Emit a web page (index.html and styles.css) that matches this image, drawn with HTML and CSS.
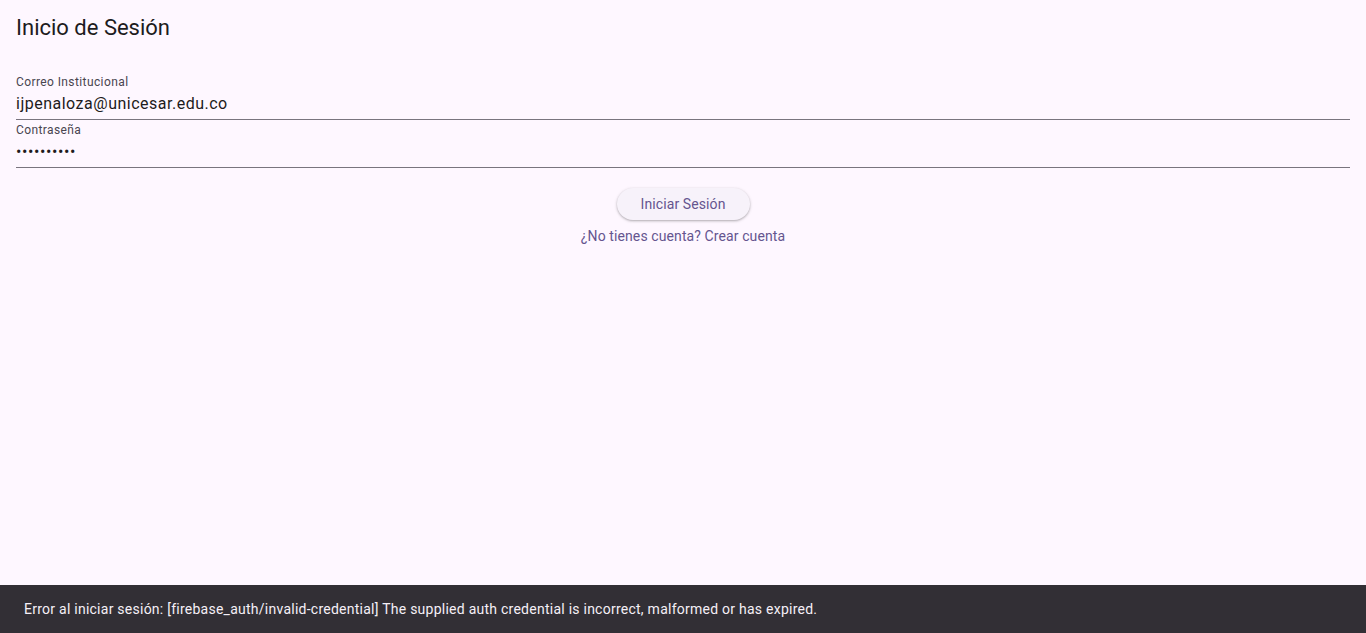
FILE: index.html
```html
<!DOCTYPE html>
<html lang="es">
<head>
<meta charset="utf-8">
<title>Inicio de Sesión</title>
<link rel="stylesheet" href="styles.css">
</head>
<body>
<div class="page">
  <main class="content">
    <h1 class="title">Inicio de Sesión</h1>
    <div class="field">
      <div class="field-label">Correo Institucional</div>
      <div class="field-value">ijpenaloza@unicesar.edu.co</div>
    </div>
    <div class="field">
      <div class="field-label">Contraseña</div>
      <div class="field-value field-password">••••••••••</div>
    </div>
    <div class="actions">
      <button class="btn-elevated" type="button">Iniciar Sesión</button>
      <a class="link" href="#">¿No tienes cuenta? Crear cuenta</a>
    </div>
  </main>
  <div class="snackbar">Error al iniciar sesión: [firebase_auth/invalid-credential] The supplied auth credential is incorrect, malformed or has expired.</div>
</div>
</body>
</html>
```

FILE: styles.css
```css
html, body {
  margin: 0;
  padding: 0;
  height: 100%;
}
body {
  background: #FEF7FF;
  font-family: Roboto, "Liberation Sans", sans-serif;
  color: #1D1B20;
  overflow: hidden;
}
.page {
  display: flex;
  flex-direction: column;
  min-height: 100vh;
}
.content {
  display: flex;
  flex-direction: column;
  padding: 0 16px;
}
.title {
  margin: 14px 0 30px;
  font-size: 22px;
  line-height: 28px;
  font-weight: 400;
  color: #1D1B20;
}
.field {
  display: flex;
  flex-direction: column;
  padding: 2px 0 3px;
  border-bottom: 1px solid #79747E;
}
.field-label {
  font-size: 12px;
  line-height: 16px;
  letter-spacing: 0.4px;
  color: #49454F;
}
.field-value {
  padding-top: 2px;
  font-size: 16px;
  line-height: 24px;
  letter-spacing: 0.5px;
  color: #1D1B20;
}
.field-password {
  letter-spacing: 0.6px;
}
.actions {
  display: flex;
  flex-direction: column;
  align-items: center;
  padding-top: 20px;
}
.btn-elevated {
  height: 32px;
  padding: 0 24px;
  border: none;
  border-radius: 16px;
  background: #F7F2FA;
  color: #65558F;
  font-family: Roboto, "Liberation Sans", sans-serif;
  font-size: 14px;
  font-weight: 400;
  letter-spacing: 0.1px;
  line-height: 20px;
  box-shadow: 0 1px 2px rgba(0,0,0,0.22), 0 1px 3px 1px rgba(0,0,0,0.08);
  cursor: pointer;
}
.link {
  margin-top: 6px;
  font-size: 14px;
  line-height: 20px;
  letter-spacing: 0.1px;
  color: #65558F;
  text-decoration: none;
}
.snackbar {
  margin-top: auto;
  height: 48px;
  display: flex;
  align-items: center;
  padding: 0 24px;
  background: #322F35;
  color: #F5EFF7;
  font-size: 14px;
  line-height: 20px;
  letter-spacing: 0.25px;
}
```
